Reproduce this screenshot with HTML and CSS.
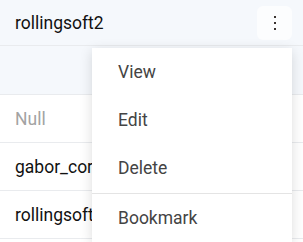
FILE: index.html
```html
<!DOCTYPE html>
<html lang="en">
<head>
    <meta charset="UTF-8">
    <meta name="viewport" content="width=device-width, initial-scale=1.0">
    <title>Rows</title>
    <link rel="stylesheet" href="styles.css">
</head>
<body>
    <div class="list">
        <div class="row row-head">
            <span class="name">rollingsoft2</span>
            <button class="more" type="button">
                <svg width="4" height="16" viewBox="0 0 4 16"><rect x="1" y="1" width="2" height="2"/><rect x="1" y="7" width="2" height="2"/><rect x="1" y="13" width="2" height="2"/></svg>
            </button>
        </div>
        <div class="row row-sub"></div>
        <div class="row"><span class="name null">Null</span></div>
        <div class="row"><span class="name">gabor_corp</span></div>
        <div class="row"><span class="name">rollingsoft</span></div>
    </div>
    <ul class="menu">
        <li>View</li>
        <li>Edit</li>
        <li>Delete</li>
        <li class="sep">Bookmark</li>
    </ul>
</body>
</html>
```
FILE: styles.css
```css
body { margin: 0; font-family: Roboto, "Liberation Sans", sans-serif; font-size: 17.5px; color: #111; background: #fff; overflow: hidden; }
.list { display: flex; flex-direction: column; }
.row { height: 48px; box-sizing: border-box; border-bottom: 1px solid #e9ebee; display: flex; align-items: center; padding: 0 11px 0 15px; }
.row-head { height: 46px; background: #f5f8fc; justify-content: space-between; }
.row-sub { height: 49px; background: #f5f8fc; }
.name { white-space: nowrap; }
.null { color: #a3a3a3; }
.more { width: 35px; height: 34px; border: none; border-radius: 6px; background: #fcfdfe; display: flex; align-items: center; justify-content: center; padding: 0; }
.more svg { fill: #3a3330; }
.menu { position: absolute; left: 92px; top: 48px; width: 200px; margin: 0; padding: 0; list-style: none; background: #fff; box-shadow: 0 3px 12px rgba(0, 0, 0, 0.14); }
.menu li { height: 48px; display: flex; align-items: center; padding-left: 26px; color: #444; }
.menu .sep { border-top: 1px solid #e4e4e4; margin-top: 1px; }
```
